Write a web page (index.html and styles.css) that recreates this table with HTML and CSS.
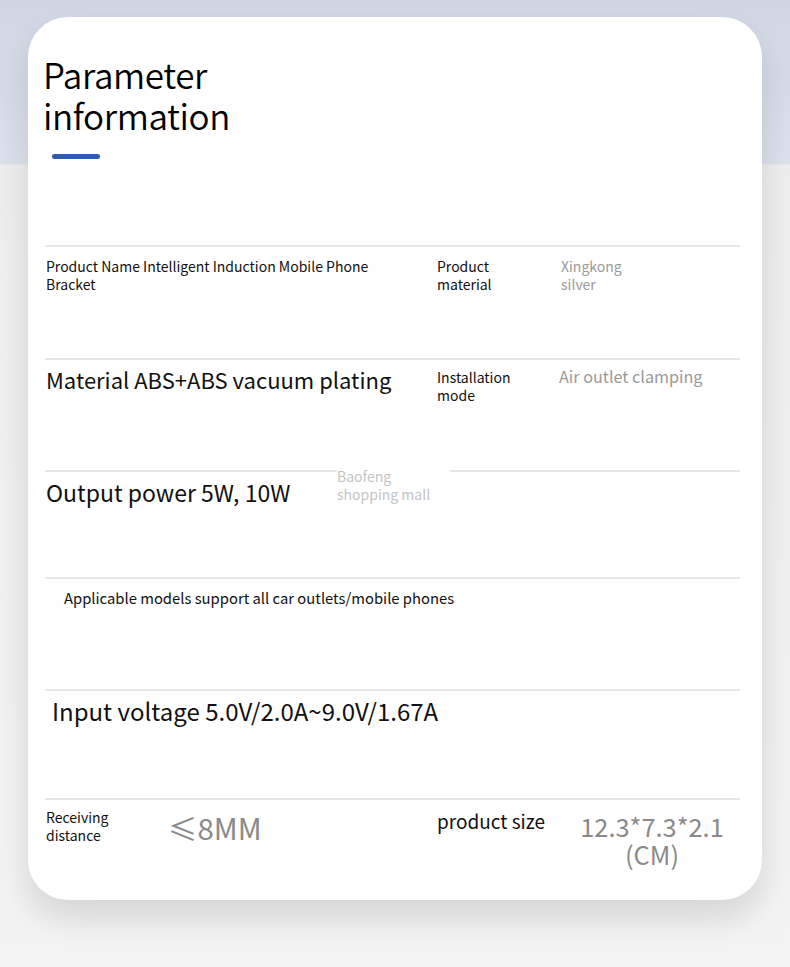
FILE: index.html
```html
<!DOCTYPE html>
<html>
<head>
<meta charset="utf-8">
<link rel="stylesheet" href="styles.css">
</head>
<body>
<div class="page">
  <div class="card">
    <h1 class="title">Parameter<br>information</h1>
    <div class="bar"></div>
    <div class="table">
      <div class="row r1">
        <div class="c-main sm">Product Name Intelligent Induction Mobile Phone Bracket</div>
        <div class="c-label sm">Product<br>material</div>
        <div class="c-val sm gray">Xingkong<br>silver</div>
      </div>
      <div class="row r2">
        <div class="c-main lg">Material ABS+ABS vacuum plating</div>
        <div class="c-label sm lab2">Installation<br>mode</div>
        <div class="c-val md gray">Air outlet clamping</div>
      </div>
      <div class="row r3">
        <div class="c-main lg out">Output power 5W, 10W</div>
        <div class="shop sm">Baofeng<br>shopping mall</div>
      </div>
      <div class="row r4">
        <div class="apply">Applicable models support all car outlets/mobile phones</div>
      </div>
      <div class="row r5">
        <div class="input">Input voltage 5.0V/2.0A~9.0V/1.67A</div>
      </div>
      <div class="row r6">
        <div class="recv">
          <div class="sm">Receiving<br>distance</div>
          <div class="dist">≤8MM</div>
        </div>
        <div class="size-label">product size</div>
        <div class="size-val">12.3*7.3*2.1<br>(CM)</div>
      </div>
    </div>
  </div>
</div>
</body>
</html>
```

FILE: styles.css
```css
* { box-sizing: border-box; }
html, body { margin: 0; padding: 0; }
body {
  width: 790px;
  height: 967px;
  overflow: hidden;
  font-family: "Noto Sans CJK SC", "Noto Sans", sans-serif;
  color: #111;
  background: linear-gradient(to bottom, #d0d6e3 0px, #dce1eb 164px, #eeeeef 165px, #f3f3f3 967px);
}
.page {
  padding: 17px 28px 0;
}
.card {
  width: 734px;
  height: 883px;
  background: #fff;
  border-radius: 40px;
  box-shadow: 0 18px 32px rgba(0, 0, 0, 0.12);
  padding: 36px 0 0 15px;
}
.title {
  margin: 0;
  font-family: "Noto Sans CJK SC", "Noto Sans", sans-serif;
  font-weight: 350;
  font-size: 35px;
  line-height: 41px;
  letter-spacing: -0.4px;
  color: #000;
}
.bar {
  width: 48px;
  height: 5px;
  border-radius: 3px;
  background: #2d5cb0;
  margin: 19px 0 0 9px;
}
.table {
  margin: 86px 0 0 2px;
  width: 695px;
}
.row {
  border-top: 2px solid #e6e6e6;
  display: flex;
  align-items: flex-start;
  padding-left: 1px;
}
.r1 { height: 113px; padding-top: 10px; }
.r2 { height: 112px; padding-top: 4px; }
.r3 { height: 107px; padding-top: 0; position: relative; }
.r4 { height: 112px; padding-top: 7px; }
.r5 { height: 109px; padding-top: 5px; }
.r6 { padding-top: 8px; }
.sm { font-size: 14px; line-height: 18px; }
.md { font-size: 16.2px; line-height: 22px; }
.lg { font-size: 23px; line-height: 30px; }
.gray { color: #9a9a9a; }
.c-main { width: 391px; padding-right: 25px; }
.c-label { width: 124px; }
.c-val { flex: 1; }
.r2 .c-main { white-space: nowrap; font-size: 22px; }
.r2 .c-label { padding-top: 4px; }
.r2 .c-val { padding-top: 1px; margin-left: -2px; }
.out { width: 291px; padding-top: 5px; }
.shop {
  color: #c4c4c4;
  background: #fff;
  margin-top: -7px;
  padding: 2px 20px 4px 0;
}
.apply { padding-left: 18px; font-size: 14.8px; line-height: 24px; }
.input { padding-left: 6px; font-size: 24px; line-height: 30px; }
.recv { width: 391px; display: flex; align-items: flex-start; }
.recv .sm { width: 122px; }
.dist { font-size: 29.5px; line-height: 34px; color: #8a8a8a; margin-top: 2px; }
.size-label { width: 140px; font-size: 19px; line-height: 26px; }
.size-val { width: 150px; text-align: center; font-size: 25.4px; line-height: 28px; color: #8a8a8a; padding-top: 4px; }
```
